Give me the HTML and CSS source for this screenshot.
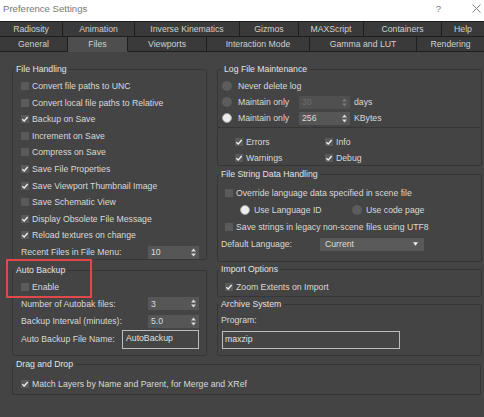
FILE: index.html
```html
<!DOCTYPE html>
<html>
<head>
<meta charset="utf-8">
<title>Preference Settings</title>
<link rel="stylesheet" href="styles.css">
</head>
<body>
<div class="titlebar">
  <span class="title">Preference Settings</span>
  <span class="help">?</span>
  <svg class="close" viewBox="0 0 9 9"><path d="M0.5 0.5 L8.5 8.5 M8.5 0.5 L0.5 8.5" stroke="#808080" stroke-width="1"/></svg>
</div>

<div class="tabs">
  <div class="tabrow row1">
    <div class="tab tab-radiosity">Radiosity</div>
    <div class="tab tab-animation">Animation</div>
    <div class="tab tab-ik">Inverse Kinematics</div>
    <div class="tab tab-gizmos">Gizmos</div>
    <div class="tab tab-maxscript">MAXScript</div>
    <div class="tab tab-containers">Containers</div>
    <div class="tab tab-help">Help</div>
  </div>
  <div class="tabrow row2">
    <div class="tab tab-general">General</div>
    <div class="tab tab-files active">Files</div>
    <div class="tab tab-viewports">Viewports</div>
    <div class="tab tab-interaction">Interaction Mode</div>
    <div class="tab tab-gamma">Gamma and LUT</div>
    <div class="tab tab-rendering">Rendering</div>
  </div>
</div>

<div class="content">
  <div class="cols">
    <div class="col">
      <div class="group g-file">
        <div class="gtitle">File Handling</div>
        <div class="gbody">
          <div class="row"><span class="cb"></span><span>Convert file paths to UNC</span></div>
          <div class="row"><span class="cb"></span><span>Convert local file paths to Relative</span></div>
          <div class="row"><span class="cb"><svg viewBox="0 0 8 8"><path d="M1.3 4.2 L3.2 6 L6.7 2" fill="none" stroke="#f0f0f0" stroke-width="1.3"/></svg></span><span>Backup on Save</span></div>
          <div class="row"><span class="cb"></span><span>Increment on Save</span></div>
          <div class="row"><span class="cb"></span><span>Compress on Save</span></div>
          <div class="row"><span class="cb"><svg viewBox="0 0 8 8"><path d="M1.3 4.2 L3.2 6 L6.7 2" fill="none" stroke="#f0f0f0" stroke-width="1.3"/></svg></span><span>Save File Properties</span></div>
          <div class="row"><span class="cb"><svg viewBox="0 0 8 8"><path d="M1.3 4.2 L3.2 6 L6.7 2" fill="none" stroke="#f0f0f0" stroke-width="1.3"/></svg></span><span>Save Viewport Thumbnail Image</span></div>
          <div class="row"><span class="cb"></span><span>Save Schematic View</span></div>
          <div class="row"><span class="cb"><svg viewBox="0 0 8 8"><path d="M1.3 4.2 L3.2 6 L6.7 2" fill="none" stroke="#f0f0f0" stroke-width="1.3"/></svg></span><span>Display Obsolete File Message</span></div>
          <div class="row"><span class="cb"><svg viewBox="0 0 8 8"><path d="M1.3 4.2 L3.2 6 L6.7 2" fill="none" stroke="#f0f0f0" stroke-width="1.3"/></svg></span><span>Reload textures on change</span></div>
          <div class="row field recent">
            <span class="lbl lbl-spin">Recent Files in File Menu:</span>
            <span class="spin"><span>10</span><svg class="arr" viewBox="0 0 5 9"><path d="M2.5 0.5 L5 3.5 L0 3.5 Z M0 5.5 L5 5.5 L2.5 8.5 Z" fill="#d8d8d8"/></svg></span>
          </div>
        </div>
      </div>

      <div class="group g-auto">
        <div class="gtitle">Auto Backup</div>
        <div class="gbody">
          <div class="row row-enable"><span class="cb"></span><span>Enable</span></div>
          <div class="row field">
            <span class="lbl lbl-spin">Number of Autobak files:</span>
            <span class="spin"><span>3</span><svg class="arr" viewBox="0 0 5 9"><path d="M2.5 0.5 L5 3.5 L0 3.5 Z M0 5.5 L5 5.5 L2.5 8.5 Z" fill="#d8d8d8"/></svg></span>
          </div>
          <div class="row field">
            <span class="lbl lbl-spin">Backup Interval (minutes):</span>
            <span class="spin"><span>5.0</span><svg class="arr" viewBox="0 0 5 9"><path d="M2.5 0.5 L5 3.5 L0 3.5 Z M0 5.5 L5 5.5 L2.5 8.5 Z" fill="#d8d8d8"/></svg></span>
          </div>
          <div class="row field row-name">
            <span class="lbl lbl-name">Auto Backup File Name:</span>
            <span class="textbox tb-auto">AutoBackup</span>
          </div>
        </div>
      </div>
    </div>

    <div class="col">
      <div class="group g-log">
        <div class="gtitle gtitle-log">Log File Maintenance</div>
        <div class="gbody">
          <div class="row row-r"><span class="rd"></span><span>Never delete log</span></div>
          <div class="row row-r"><span class="rd"></span><span class="lbl lbl-m">Maintain only</span>
            <span class="spin disabled"><span>30</span><svg class="arr" viewBox="0 0 5 9"><path d="M2.5 0.5 L5 3.5 L0 3.5 Z M0 5.5 L5 5.5 L2.5 8.5 Z" fill="#7a7a7a"/></svg></span><span class="unit">days</span></div>
          <div class="row row-r"><span class="rd on"></span><span class="lbl lbl-m">Maintain only</span>
            <span class="spin"><span>256</span><svg class="arr" viewBox="0 0 5 9"><path d="M2.5 0.5 L5 3.5 L0 3.5 Z M0 5.5 L5 5.5 L2.5 8.5 Z" fill="#d8d8d8"/></svg></span><span class="unit">KBytes</span></div>
        </div>
      </div>
      <div class="box-log">
        <div class="row"><span class="logcol"><span class="cb"><svg viewBox="0 0 8 8"><path d="M1.3 4.2 L3.2 6 L6.7 2" fill="none" stroke="#f0f0f0" stroke-width="1.3"/></svg></span><span>Errors</span></span><span class="cb"><svg viewBox="0 0 8 8"><path d="M1.3 4.2 L3.2 6 L6.7 2" fill="none" stroke="#f0f0f0" stroke-width="1.3"/></svg></span><span>Info</span></div>
        <div class="row"><span class="logcol"><span class="cb"><svg viewBox="0 0 8 8"><path d="M1.3 4.2 L3.2 6 L6.7 2" fill="none" stroke="#f0f0f0" stroke-width="1.3"/></svg></span><span>Warnings</span></span><span class="cb"><svg viewBox="0 0 8 8"><path d="M1.3 4.2 L3.2 6 L6.7 2" fill="none" stroke="#f0f0f0" stroke-width="1.3"/></svg></span><span>Debug</span></div>
      </div>

      <div class="group g-fs">
        <div class="gtitle">File String Data Handling</div>
        <div class="gbody">
          <div class="row row-17"><span class="cb"></span><span>Override language data specified in scene file</span></div>
          <div class="row row-17 row-radios">
            <span class="ritem"><span class="rd on"></span><span>Use Language ID</span></span>
            <span class="rd"></span><span>Use code page</span>
          </div>
          <div class="row row-17"><span class="cb"></span><span>Save strings in legacy non-scene files using UTF8</span></div>
          <div class="row row-17 row-lang">
            <span class="lbl lbl-lang">Default Language:</span>
            <span class="dropdown"><span>Current</span><svg class="darr" viewBox="0 0 6 4"><path d="M0 0 L6 0 L3 4 Z" fill="#f0f0f0"/></svg></span>
          </div>
        </div>
      </div>

      <div class="group g-imp">
        <div class="gtitle">Import Options</div>
        <div class="gbody">
          <div class="row"><span class="cb"><svg viewBox="0 0 8 8"><path d="M1.3 4.2 L3.2 6 L6.7 2" fill="none" stroke="#f0f0f0" stroke-width="1.3"/></svg></span><span>Zoom Extents on Import</span></div>
        </div>
      </div>

      <div class="group g-arc">
        <div class="gtitle">Archive System</div>
        <div class="gbody">
          <div class="row row-prog">Program:</div>
          <div class="textbox tb-arc">maxzip</div>
        </div>
      </div>
    </div>
  </div>

  <div class="group g-drag">
    <div class="gtitle">Drag and Drop</div>
    <div class="gbody">
      <div class="row"><span class="cb"><svg viewBox="0 0 8 8"><path d="M1.3 4.2 L3.2 6 L6.7 2" fill="none" stroke="#f0f0f0" stroke-width="1.3"/></svg></span><span>Match Layers by Name and Parent, for Merge and XRef</span></div>
    </div>
  </div>
</div>

<div class="annot"></div>
</body>
</html>
```

FILE: styles.css
```css
* { box-sizing: border-box; }

body {
  margin: 0;
  width: 484px;
  height: 417px;
  overflow: hidden;
  position: relative;
  background: #444444;
  font-family: "Liberation Sans", Arial, sans-serif;
  font-size: 8.7px;
  color: #d9d9d9;
}

/* title bar */
.titlebar {
  height: 21px;
  background: #ffffff;
  display: flex;
  align-items: flex-start;
  padding: 3px 0 0 3px;
  color: #777777;
}
.title { font-size: 9.6px; line-height: 11px; }
.help { margin-left: auto; margin-right: 31px; font-size: 9.6px; line-height: 11px; }
.close { width: 9px; height: 9px; margin: 1px 3px 0 0; }

/* tabs */
.tabrow { display: flex; }
.row1 { height: 16px; }
.row2 { height: 15px; }
.tab {
  background: #3a3a3a;
  border-right: 1px solid #1e1e1e;
  border-bottom: 1px solid #1e1e1e;
  color: #d0d0d0;
  display: flex;
  align-items: center;
  justify-content: center;
  white-space: nowrap;
}
.row1 .tab { border-top: 1px solid #1e1e1e; }
.tab:last-child { border-right: none; }
.tab.active { background: #4e4e4e; border-bottom-color: #4e4e4e; }

.tab-radiosity { width: 63px; }
.tab-animation { width: 72px; }
.tab-ik { width: 105px; }
.tab-gizmos { width: 59px; }
.tab-maxscript { width: 65px; }
.tab-containers { width: 78px; }
.tab-help { width: 42px; }
.tab-general { width: 68px; }
.tab-files { width: 60px; }
.tab-viewports { width: 79px; }
.tab-interaction { width: 103px; }
.tab-gamma { width: 107px; }
.tab-rendering { width: 67px; }

/* content */
.content { padding: 17px 2px 0 12px; }
.cols {
  display: grid;
  grid-template-columns: 195px 265px;
  column-gap: 10px;
}

.group {
  border: 1px solid #363636;
  border-radius: 2px;
}
.gtitle {
  display: table;
  margin: -7px 0 0 1px;
  padding: 0 2px;
  line-height: 12px;
  background: #444444;
  color: #e2e2e2;
  white-space: nowrap;
}
.gtitle-log { margin-left: 4px; }

.row {
  display: flex;
  align-items: center;
  height: 16.6px;
  white-space: nowrap;
}
.row-17 { height: 17px; }

.cb {
  flex: none;
  width: 8px;
  height: 8px;
  margin-right: 3px;
  background: #5a5a5a;
  display: flex;
}
.cb svg { width: 8px; height: 8px; }

.rd {
  flex: none;
  width: 10px;
  height: 10px;
  border-radius: 50%;
  background: #5c5c5c;
  margin-right: 6px;
}
.rd.on {
  background: #ececec;
  border: 1px solid #a0a0a0;
}

.lbl { flex: none; }
.lbl-spin { width: 127px; }
.lbl-name { width: 101px; }
.lbl-m { width: 61px; }
.lbl-lang { width: 99px; margin-left: -4px; }

.spin {
  flex: none;
  width: 51px;
  height: 13px;
  background: #565656;
  display: flex;
  align-items: center;
  justify-content: space-between;
  padding: 0 3px;
  color: #dcdcdc;
}
.spin.disabled { background: #505050; color: #6e6e6e; }
.arr { width: 5px; height: 9px; }
.unit { margin-left: 4px; }

.textbox {
  display: block;
  height: 19px;
  border: 1px solid #bcbcbc;
  background: #454545;
  padding: 1px 3px;
  line-height: 13px;
  color: #e0e0e0;
  white-space: nowrap;
}
.tb-auto { width: 77px; }

.dropdown {
  flex: none;
  width: 104px;
  height: 13px;
  background: #5a5a5a;
  display: flex;
  align-items: center;
  justify-content: space-between;
  padding: 0 6px 0 5px;
  color: #dcdcdc;
}
.darr { width: 5px; height: 4px; }

/* left groups */
.g-file { height: 191px; }
.g-file .gbody { padding: 2.7px 0 0 8px; }
.recent { height: 14px; }

.g-auto { height: 86px; margin-top: 10px; }
.g-auto .gbody { padding: 3px 0 0 8px; }
.row-enable { height: 16px; }
.field { height: 17.4px; }
.row-name { height: 19px; }

/* right groups */
.g-log { height: 59px; }
.g-log .gbody { padding: 3px 0 0 4px; }
.row-r { height: 16px; }

.box-log {
  height: 39px;
  margin-top: -1px;
  border: 1px solid #363636;
  border-radius: 2px;
  padding: 5.5px 0 0 17px;
}
.box-log .row { height: 16px; }
.logcol { display: flex; align-items: center; width: 90px; }

.g-fs { height: 88px; margin-top: 8px; }
.g-fs .gbody { padding: 4.5px 0 0 7px; }
.row-radios { padding-left: 15px; }
.ritem { display: flex; align-items: center; width: 112px; }
.row-radios .rd { margin-right: 4px; }

.g-imp { height: 28px; margin-top: 7px; }
.g-imp .gbody { padding: 4px 0 0 7px; }
.g-imp .row { height: 16px; }

.g-arc { height: 52px; margin-top: 7px; }
.g-arc .gbody { padding: 3px 0 0 3px; }
.row-prog { height: 14px; }
.tb-arc { width: 178px; height: 18px; margin: 4px 0 0 1px; padding: 1px 2px; }

.g-drag { width: 469px; height: 31px; margin-top: 8px; }
.g-drag .gbody { padding: 6px 0 0 8px; }
.g-drag .row { height: 16px; }

/* red annotation overlay */
.annot {
  position: absolute;
  left: 6px;
  top: 259px;
  width: 86px;
  height: 39px;
  border: 2px solid #e2474a;
}
```
